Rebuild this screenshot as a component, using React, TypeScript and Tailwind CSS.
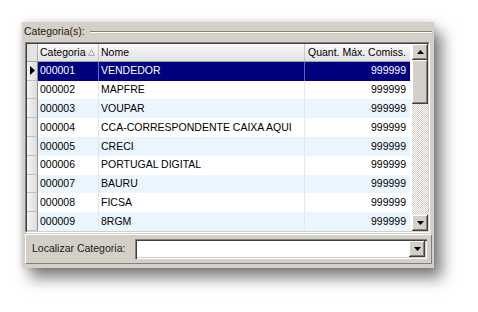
const rows = [
  { id: "000001", nome: "VENDEDOR", qtd: "999999" },
  { id: "000002", nome: "MAPFRE", qtd: "999999" },
  { id: "000003", nome: "VOUPAR", qtd: "999999" },
  { id: "000004", nome: "CCA-CORRESPONDENTE CAIXA AQUI", qtd: "999999" },
  { id: "000005", nome: "CRECI", qtd: "999999" },
  { id: "000006", nome: "PORTUGAL DIGITAL", qtd: "999999" },
  { id: "000007", nome: "BAURU", qtd: "999999" },
  { id: "000008", nome: "FICSA", qtd: "999999" },
  { id: "000009", nome: "8RGM", qtd: "999999" },
];

const raised =
  "bg-[#d4d0c8] shadow-[inset_-1px_-1px_#404040,inset_1px_1px_#ffffff,inset_-2px_-2px_#808080,inset_2px_2px_#d4d0c8]";

function Arrow({ up }: { up?: boolean }) {
  return (
    <svg width="7" height="4" viewBox="0 0 7 4">
      <path d={up ? "M3.5 0 L7 4 L0 4 Z" : "M0 0 L7 0 L3.5 4 Z"} fill="#000" />
    </svg>
  );
}

function ScrollBar() {
  return (
    <div className="flex h-full w-[16px] flex-col">
      <div className={`flex h-[16px] items-center justify-center ${raised}`}>
        <Arrow up />
      </div>
      <div className={`h-[44px] ${raised}`} />
      <div className="flex-1 bg-[repeating-conic-gradient(#d4d0c8_0%_25%,#ffffff_0%_50%)] bg-[length:2px_2px]" />
      <div className={`flex h-[16px] items-center justify-center ${raised}`}>
        <Arrow />
      </div>
    </div>
  );
}

export default function App() {
  return (
    <div className="h-[312px] w-[478px] bg-white pl-[22px] pt-[22px] font-['Liberation_Sans',Arial,sans-serif] text-[10.5px] text-black">
      <div className="flex h-[246px] w-[412px] flex-col bg-[#d4d0c8] shadow-[8px_10px_14px_rgba(0,0,0,0.5),0_0_6px_rgba(0,0,0,0.15)]">
        <div className="flex h-[18px] items-center pl-[2px] pt-[1px]">
          <span className="text-[#1a1a1a]">Categoria(s):</span>
          <div className="ml-[5px] mr-[2px] h-[2px] flex-1 border-t border-b border-t-[#808080] border-b-white" />
        </div>
        <div className="ml-[3px] mt-[2px] w-[405px] border border-[#808080] border-b-white border-r-white">
          <div className="flex h-[189px] border border-[#404040] border-b-[#d4d0c8] border-r-[#d4d0c8] bg-white">
            <div className="flex w-[383px] flex-col">
              <div className="flex h-[18px] border-b border-[#a0a0a0] bg-gradient-to-b from-[#fafafa] to-[#e2e2e2]">
                <div className="w-[11px] border-r border-[#b0b0b0] bg-[#e4e4e4]" />
                <div className="flex w-[61px] items-center border-r border-[#c8c8c8] pl-[2px]">
                  <span>Categoria</span>
                  <svg width="7" height="7" viewBox="0 0 7 7" className="ml-[2px]">
                    <path d="M3.5 0.5 L6.5 6.5 L0.5 6.5 Z" fill="none" stroke="#a8a8a8" strokeWidth="1" />
                  </svg>
                </div>
                <div className="flex w-[206px] items-center border-r border-[#c8c8c8] pl-[2px]">Nome</div>
                <div className="flex w-[105px] items-center justify-end pr-[4px]">Quant. Máx. Comiss.</div>
              </div>
              {rows.map((r, i) => {
                const sel = i === 0;
                const bg = sel ? "bg-[#000080] text-white" : i % 2 === 0 ? "bg-[#ebf5fe]" : "bg-white";
                const sep = sel ? "border-[#5a6ab8]" : "border-[#e6e6e6]";
                return (
                  <div key={r.id} className="flex h-[19px]">
                    <div className="flex w-[11px] items-center justify-center border-b border-r border-b-[#c0c0c0] border-r-[#909090] bg-gradient-to-r from-[#f4f4f4] to-[#dcdcdc]">
                      {sel && (
                        <svg width="5" height="9" viewBox="0 0 5 9">
                          <path d="M0 0 L5 4.5 L0 9 Z" fill="#000" />
                        </svg>
                      )}
                    </div>
                    <div className={`flex flex-1 ${bg}`}>
                      <div className={`flex w-[61px] items-center border-r pl-[2px] ${sep}`}>{r.id}</div>
                      <div className={`flex w-[206px] items-center border-r pl-[2px] ${sep}`}>{r.nome}</div>
                      <div className="flex flex-1 items-center justify-end pr-[4px]">{r.qtd}</div>
                    </div>
                  </div>
                );
              })}
            </div>
            <div className="ml-auto">
              <ScrollBar />
            </div>
          </div>
        </div>
        <div className="ml-[3px] mt-[1px] flex h-[30px] w-[407px] items-center border border-b-[#808080] border-l-white border-r-[#808080] border-t-white pl-[6px]">
          <span className="w-[103px] shrink-0 text-[#1a1a1a]">Localizar Categoria:</span>
          <div className="flex h-[20px] w-[292px] items-center justify-end bg-white p-[2px] shadow-[inset_1px_1px_#808080,inset_2px_2px_#404040,inset_-1px_-1px_#ffffff,inset_-2px_-2px_#d4d0c8]">
            <div className={`flex h-[16px] w-[16px] items-center justify-center ${raised}`}>
              <Arrow />
            </div>
          </div>
        </div>
      </div>
    </div>
  );
}
